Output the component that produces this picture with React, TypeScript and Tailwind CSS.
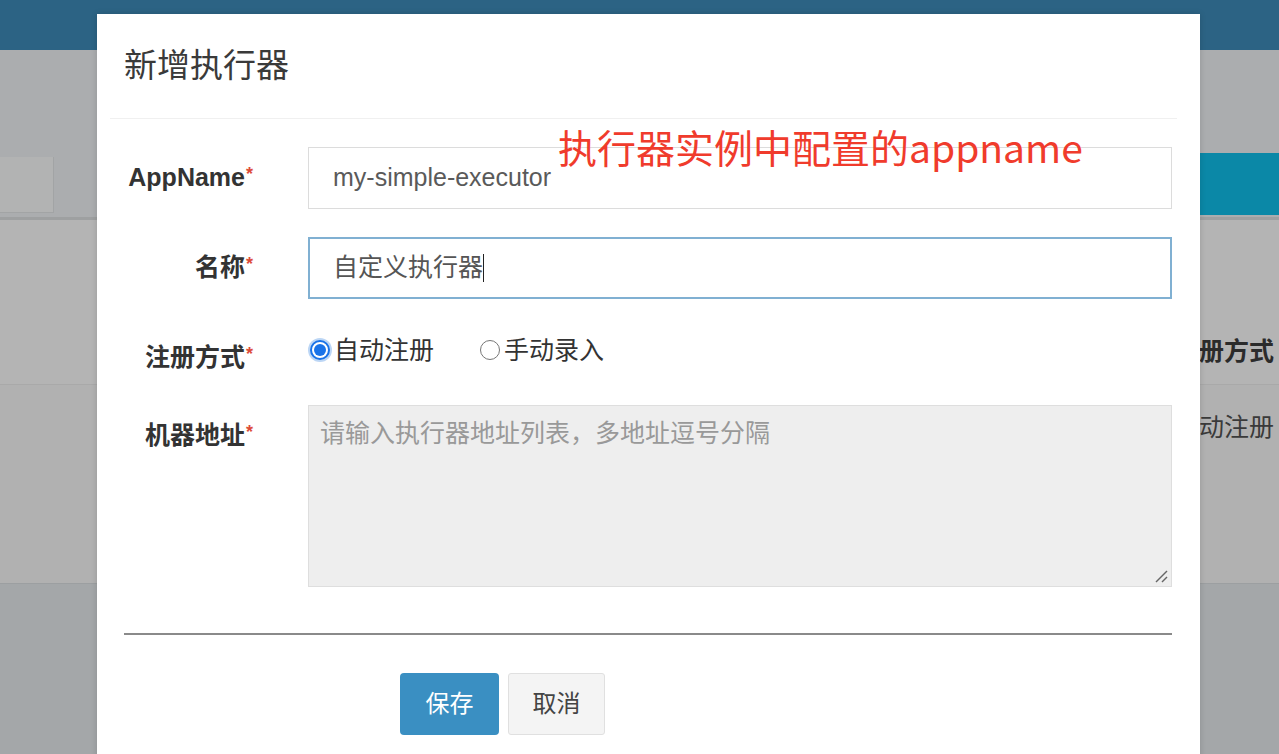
import React from "react";

const font = "font-['Liberation_Sans','Noto_Sans_CJK_SC',sans-serif]";

function Star() {
  return <span className="text-[#dd4b39] text-[18px] relative -top-[6px] ml-[1px]">*</span>;
}

function Label({ text }: { text: string }) {
  return (
    <div className="w-[131px] h-[62px] flex items-center justify-end pr-[2px] shrink-0">
      <span className="text-[25px] font-bold text-[#333] whitespace-nowrap">
        {text}
        <Star />
      </span>
    </div>
  );
}

function Radio({ checked, text }: { checked?: boolean; text: string }) {
  return (
    <label className="flex items-center gap-[4px] h-[30px]">
      {checked ? (
        <span className="w-[20px] h-[20px] rounded-full border-2 border-[#1a73e8] bg-white flex items-center justify-center ring-2 ring-[#bcd6f5]">
          <span className="w-[12px] h-[12px] rounded-full bg-[#1a73e8]" />
        </span>
      ) : (
        <span className="w-[20px] h-[20px] rounded-full border border-[#767676] bg-white" />
      )}
      <span className="text-[25px] text-[#333] leading-none">{text}</span>
    </label>
  );
}

export default function App() {
  return (
    <div className={`relative w-[1279px] h-[754px] overflow-hidden bg-[#a4a7a9] ${font}`}>
      {/* dimmed page behind the modal */}
      <div className="flex flex-col">
        <div className="h-[50px] bg-[#2c6384]" />
        <div className="h-[103px] bg-[#abadaf]" />
        <div className="h-[64px] bg-[#abadaf] flex justify-between items-start">
          <div className="mt-[4px] w-[54px] h-[56px] bg-[#b2b3b3] border-r border-b border-[#a2a4a5]" />
          <div className="w-[79px] h-[62px] bg-[#0b88a7]" />
        </div>
        <div className="h-[3px] bg-[#9ea0a1]" />
        <div className="h-[164px] bg-[#b4b4b4] flex items-end pb-[14px] pl-[1174px] whitespace-nowrap">
          <span className="text-[25px] font-bold text-[#2b2b2b]">注册方式</span>
        </div>
        <div className="h-[1px] bg-[#a9a9a9]" />
        <div className="h-[198px] bg-[#b1b1b1] pt-[24px] pl-[1174px] whitespace-nowrap">
          <span className="text-[25px] text-[#3a3a3a]">自动注册</span>
        </div>
        <div className="h-[1px] bg-[#9c9fa1]" />
        <div className="flex-1 bg-[#a4a7a9]" />
      </div>

      {/* modal */}
      <div className="absolute left-[97px] top-[14px] w-[1103px] h-[760px] bg-white shadow-[0_0_6px_rgba(0,0,0,0.15)]">
        <div className="h-[104px] flex items-center pl-[27px]">
          <h4 className="text-[33px] text-[#3a3a3a] font-normal">新增执行器</h4>
        </div>
        <div className="h-[1px] ml-[13px] mr-[23px] bg-[#f0f0f0]" />

        <div className="pt-[28px] pl-[27px] pr-[28px]">
          <div className="flex gap-[53px]">
            <Label text="AppName" />
            <div className="flex-1 h-[62px] border border-[#dcdcdc] flex items-center pl-[24px] text-[25px] text-[#5a5a5a]">
              my-simple-executor
            </div>
          </div>

          <div className="flex gap-[53px] mt-[28px]">
            <Label text="名称" />
            <div className="flex-1 h-[62px] border-2 border-[#80b0d2] flex items-center pl-[23px] text-[25px] text-[#555]">
              自定义执行器
              <span className="w-[1px] h-[28px] bg-[#222]" />
            </div>
          </div>

          <div className="flex gap-[53px] mt-[28px]">
            <Label text="注册方式" />
            <div className="flex-1 pt-[8px] pl-[2px] flex gap-[46px] items-start">
              <Radio checked text="自动注册" />
              <Radio text="手动录入" />
            </div>
          </div>

          <div className="flex gap-[53px] mt-[16px]">
            <Label text="机器地址" />
            <div className="relative flex-1 h-[182px] bg-[#eeeeee] border border-[#dedede] pl-[11px] pt-[9px] text-[25px] text-[#999]">
              请输入执行器地址列表，多地址逗号分隔
              <svg className="absolute right-[3px] bottom-[3px]" width="16" height="16" viewBox="0 0 16 16">
                <line x1="4" y1="15" x2="15" y2="4" stroke="#666" strokeWidth="1.5" />
                <line x1="10" y1="15" x2="15" y2="10" stroke="#666" strokeWidth="1.5" />
              </svg>
            </div>
          </div>

          <div className="mt-[46px] h-[2px] bg-[#8a8a8a]" />

          <div className="mt-[38px] pl-[276px] flex gap-[9px]">
            <button className="w-[99px] h-[62px] rounded-[4px] bg-[#3a8fc2] text-white text-[24px]">保存</button>
            <button className="w-[97px] h-[62px] rounded-[3px] bg-[#f4f4f4] border border-[#e0e0e0] text-[#444] text-[24px]">取消</button>
          </div>
        </div>

        {/* annotation */}
        <div className="absolute left-[461px] top-[113px] text-[39px] leading-none text-[#f03b2c] font-['Noto_Sans_CJK_SC',sans-serif] whitespace-nowrap">
          执行器实例中配置的appname
        </div>
      </div>
    </div>
  );
}
